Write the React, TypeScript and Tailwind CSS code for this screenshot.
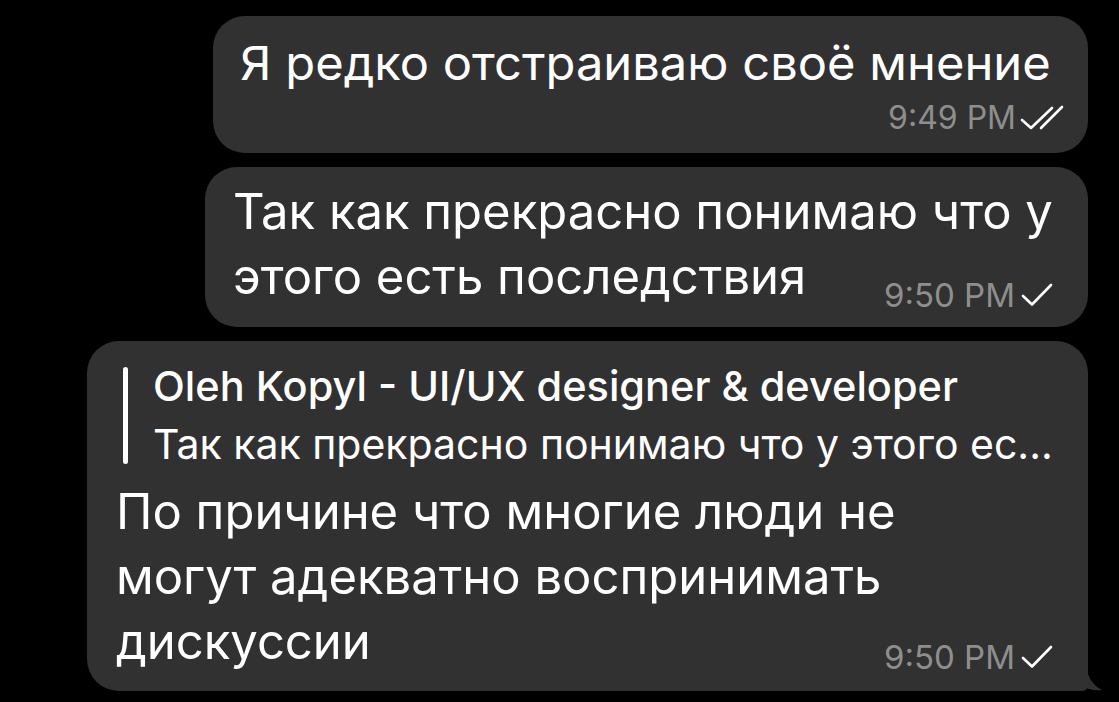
import React from "react";

const font = { fontFamily: "Inter, 'Noto Sans', sans-serif" };

function Check() {
  return (
    <svg width="32" height="24" viewBox="0 0 32 24" fill="none">
      <path d="M2 13 L11 21.5 L30 2" stroke="white" strokeWidth="2.6" strokeLinecap="round" strokeLinejoin="round" />
    </svg>
  );
}

function DoubleCheck() {
  return (
    <svg width="44" height="26" viewBox="0 0 44 26" fill="none">
      <path d="M2 15 L11 23 L32 3" stroke="white" strokeWidth="2.6" strokeLinecap="round" strokeLinejoin="round" />
      <path d="M21 23 L42 2" stroke="white" strokeWidth="2.6" strokeLinecap="round" />
    </svg>
  );
}

export default function App() {
  return (
    <div
      className="w-[1119px] h-[702px] bg-black flex flex-col items-end pt-[16px] pr-[31px] gap-[14px] overflow-hidden text-white"
      style={font}
    >
      {/* Bubble 1 */}
      <div className="w-[875px] h-[137px] bg-[#313131] rounded-[32px] pl-[27px] pr-[24px] pt-[19px] flex flex-col">
        <div className="text-[47px] leading-[56px] origin-left scale-x-[1.04] whitespace-nowrap">
          Я редко отстраиваю своё мнение
        </div>
        <div className="flex items-center justify-end gap-[4px] mt-[9px]">
          <span className="text-[32px] leading-[36px] text-[#8e8e8e]">9:49 PM</span>
          <DoubleCheck />
        </div>
      </div>

      {/* Bubble 2 */}
      <div className="w-[883px] h-[160px] bg-[#313131] rounded-[32px] pl-[28px] pr-[35px] pt-[12px] grid">
        <div className="[grid-area:1/1] text-[49px] leading-[65px] whitespace-nowrap">
          Так как прекрасно понимаю что у
          <br />
          этого есть последствия
        </div>
        <div className="[grid-area:1/1] self-end justify-self-end flex items-center gap-[6px] mb-[14px]">
          <span className="text-[33px] leading-[36px] text-[#8e8e8e]">9:50 PM</span>
          <Check />
        </div>
      </div>

      {/* Bubble 3 */}
      <div className="relative w-[1001px] h-[350px] bg-[#313131] rounded-[32px] rounded-br-[6px] pl-[35px] pr-[35px] pt-[16px] grid">
        <div className="[grid-area:1/1] flex flex-col">
          <div className="flex items-center gap-[25px] pl-[1px]">
            <div className="w-[5px] h-[97px] bg-white rounded-full" />
            <div className="flex flex-col">
              <div className="text-[41.5px] leading-[58px] font-medium whitespace-nowrap">
                Oleh Kopyl - UI/UX designer &amp; developer
              </div>
              <div className="text-[41px] leading-[58px] whitespace-nowrap">
                Так как прекрасно понимаю что у этого ес...
              </div>
            </div>
          </div>
          <div className="-ml-[6px] mt-[6px] text-[49px] leading-[65px] whitespace-nowrap">
            По причине что многие люди не
            <br />
            могут адекватно воспринимать
            <br />
            дискуссии
          </div>
        </div>
        <div className="[grid-area:1/1] self-end justify-self-end flex items-center gap-[6px] mb-[16px]">
          <span className="text-[33px] leading-[36px] text-[#8e8e8e]">9:50 PM</span>
          <Check />
        </div>
        <svg className="absolute right-[-14px] bottom-0" width="30" height="30" viewBox="0 0 30 30">
          <path d="M0 0 L14 0 C14 14 20 24 30 29 C22 30 14 28 8 24 C5 27 2 29 0 30 Z" fill="#313131" />
        </svg>
      </div>
    </div>
  );
}
